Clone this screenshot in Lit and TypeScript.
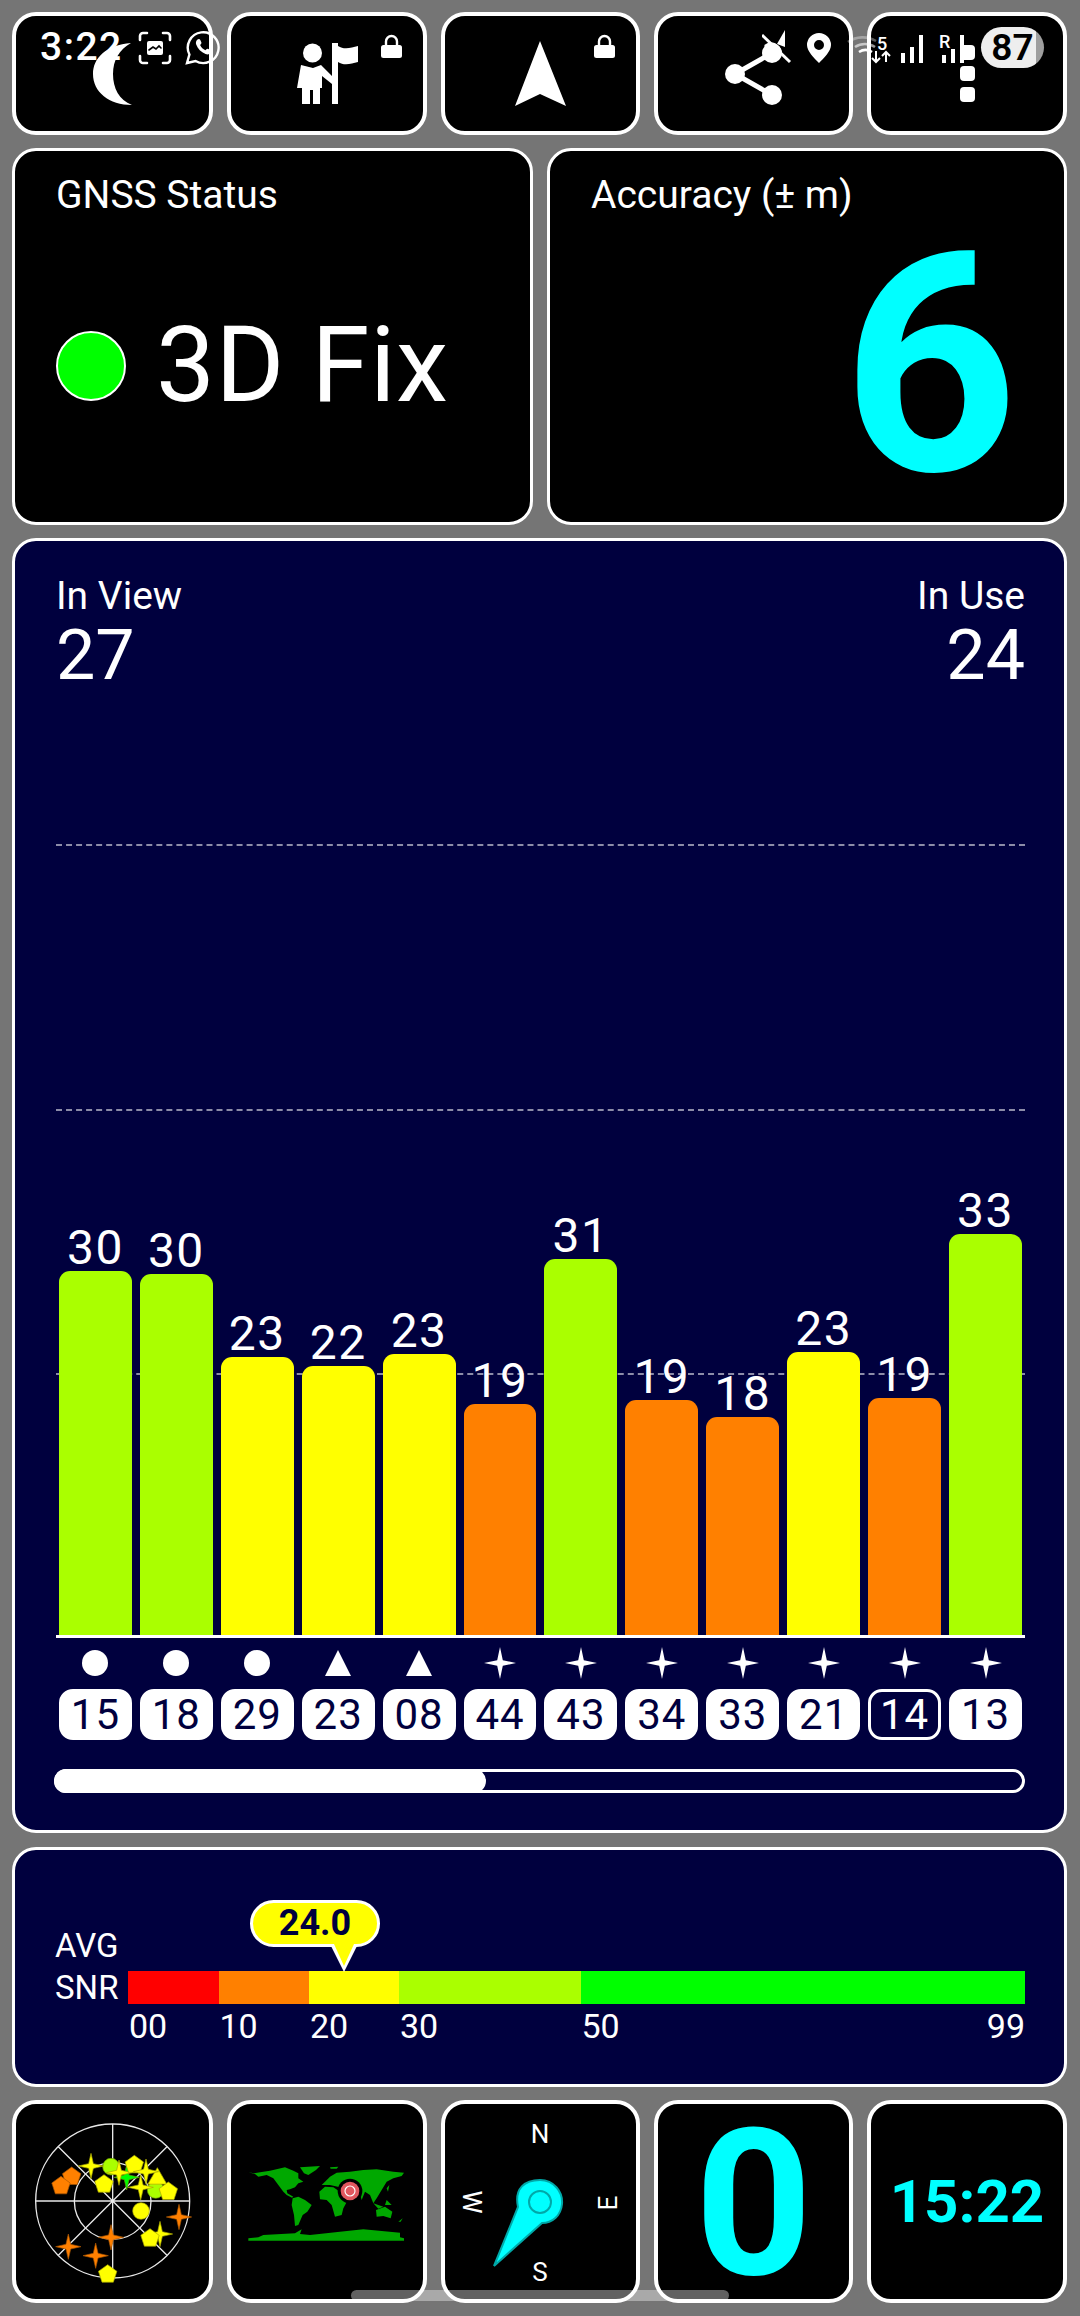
import { LitElement, html, css, svg } from "lit";
import { customElement } from "lit/decorators.js";

const bars: { v: number; top: number; color: string; icon: string; id: string; off?: boolean }[] = [
  { v: 30, top: 1272, color: "#aaff00", icon: "c", id: "15" },
  { v: 30, top: 1275, color: "#aaff00", icon: "c", id: "18" },
  { v: 23, top: 1358, color: "#ffff00", icon: "c", id: "29" },
  { v: 22, top: 1367, color: "#ffff00", icon: "t", id: "23" },
  { v: 23, top: 1355, color: "#ffff00", icon: "t", id: "08" },
  { v: 19, top: 1405, color: "#ff8000", icon: "s", id: "44" },
  { v: 31, top: 1260, color: "#aaff00", icon: "s", id: "43" },
  { v: 19, top: 1401, color: "#ff8000", icon: "s", id: "34" },
  { v: 18, top: 1418, color: "#ff8000", icon: "s", id: "33" },
  { v: 23, top: 1353, color: "#ffff00", icon: "s", id: "21" },
  { v: 19, top: 1399, color: "#ff8000", icon: "s", id: "14", off: true },
  { v: 33, top: 1235, color: "#aaff00", icon: "s", id: "13" },
];

const segs = [
  { w: 90.5, c: "#ff0000", l: "00" },
  { w: 90.5, c: "#ff8000", l: "10" },
  { w: 90, c: "#ffff00", l: "20" },
  { w: 181.5, c: "#aaff00", l: "30" },
  { w: 444.5, c: "#00ff00", l: "50", r: "99" },
];

function pts(cx: number, cy: number, r: number, n: number, inner?: number) {
  const out: string[] = [];
  const count = inner ? n * 2 : n;
  for (let i = 0; i < count; i++) {
    const a = -Math.PI / 2 + (i * 2 * Math.PI) / count;
    const rr = inner && i % 2 ? inner : r;
    out.push(`${(cx + rr * Math.cos(a)).toFixed(1)},${(cy + rr * Math.sin(a)).toFixed(1)}`);
  }
  return out.join(" ");
}

const Y = "#ffff00", O = "#ff8000", G = "#aaff00";
const sats: [string, number, number, string][] = [
  ["p", 215, 260, O], ["p", 183, 288, O],
  ["s", 537, 381, O], ["s", 205, 470, O], ["s", 287, 497, O], ["s", 333, 442, O],
  ["c", 333, 230, G], ["c", 467, 300, G], ["s", 380, 262, "#00ff00"],
  ["s", 273, 228, Y], ["p", 312, 283, Y], ["s", 357, 248, Y], ["p", 403, 225, Y],
  ["t", 472, 260, Y], ["s", 438, 245, Y], ["s", 422, 292, Y], ["p", 505, 305, Y],
  ["c", 423, 363, Y], ["s", 480, 432, Y], ["p", 450, 445, Y], ["p", 323, 553, Y],
];

function sat(k: string, x: number, y: number, c: string) {
  const st = c === O ? "#a85400" : c === Y ? "#a8a800" : "#6a9a00";
  if (k === "c") return svg`<circle cx=${x} cy=${y} r="25" fill=${c} stroke=${st} stroke-width="2"/>`;
  if (k === "p") return svg`<polygon points=${pts(x, y, 29, 5)} fill=${c} stroke=${st} stroke-width="2"/>`;
  if (k === "t") return svg`<polygon points=${pts(x, y + 6, 33, 3)} fill=${c} stroke=${st} stroke-width="2"/>`;
  return svg`<polygon points=${pts(x, y, 38, 4, 10)} fill=${c} stroke=${st} stroke-width="2"/>`;
}

const lock = html`<svg class="lock" viewBox="0 0 21 24"><path d="M5 12V7.500a5.500 5.500 0 0 1 11 0V12" fill="none" stroke="#fff" stroke-width="2.400"/><rect x="0" y="11" width="21" height="13" rx="2.500" fill="#fff"/></svg>`;

@customElement("app-root")
export class AppRoot extends LitElement {
  static styles = css`
    :host { display: block; width: 1080px; height: 2316px; background: #757575; font-family: Roboto, "Liberation Sans", sans-serif; color: #fff; position: relative; overflow: hidden; }
    * { box-sizing: border-box; }
    .page { display: flex; flex-direction: column; padding: 12px 13px 0 12px; }
    .tile { border: 3px solid #fff; border-radius: 24px; background: #000; position: relative; min-height: 0; }
    .thick .tile { border-width: 4px; }
    .navy { background: #00003e; }
    .r1 { display: grid; grid-template-columns: 201px 200px 199px 199px 200px; grid-template-rows: 123px; gap: 14px; height: 123px; }
    .r2 { display: grid; grid-template-columns: 521px 520px; grid-template-rows: 377px; gap: 14px; height: 377px; margin-top: 13px; }
    .r5 { display: grid; grid-template-columns: 201px 200px 199px 199px 200px; grid-template-rows: 203px; gap: 14px; height: 203px; margin-top: 13px; }
    .center { display: flex; align-items: center; justify-content: center; }
    .lock { position: absolute; width: 21px; height: 24px; top: 18px; right: 21px; }
    .moon { width: 39px; height: 62px; }
    .person { width: 61px; height: 61px; }
    .arrow { width: 51px; height: 65px; }
    .share { width: 57px; height: 62px; }
    .dots { display: flex; flex-direction: column; gap: 6px; }
    .dots i { display: block; width: 15px; height: 15px; border-radius: 4px; background: #fff; }

    .status { position: absolute; left: 0; top: 27px; width: 1080px; height: 41px; display: flex; align-items: center; justify-content: space-between; padding: 0 36px 0 40px; }
    .sl, .sr { display: flex; align-items: center; }
    .time { font-size: 39px; font-weight: 500; letter-spacing: 1.5px; width: 81px; margin-right: 17px; line-height: 41px; white-space: nowrap; }
    .shot { width: 34px; height: 34px; margin-right: 13px; }
    .wa { width: 35px; height: 35px; }
    .cluster { width: 213px; height: 40px; margin-right: 6px; }
    .batt { width: 63px; height: 41px; border-radius: 21px; background: linear-gradient(90deg, #eee 87%, #9e9e9e 87%); color: #000; font-size: 37px; font-weight: 600; display: flex; align-items: center; justify-content: center; }

    .label { font-size: 39px; line-height: 44px; position: absolute; left: 41px; top: 22px; white-space: nowrap; }
    .fix { display: flex; align-items: center; height: 100%; padding: 58px 0 0 41px; }
    .dot { width: 70px; height: 70px; border-radius: 50%; background: #00ff00; border: 2px solid #fff; margin-right: 30px; flex: none; }
    .fixt { font-size: 105px; line-height: 110px; letter-spacing: 0.5px; white-space: nowrap; }
    .acc { height: 100%; display: flex; align-items: flex-start; justify-content: flex-end; padding: 65px 46px 0 0; }
    .six { font-size: 306px; font-weight: 700; line-height: 300px; color: #00ffff; }

    .chart { height: 1295px; margin-top: 13px; padding: 35px 39px 0 41px; display: flex; flex-direction: column; }
    .head { display: flex; justify-content: space-between; height: 111px; }
    .head > div:last-child { text-align: right; }
    .hl { font-size: 39px; line-height: 40px; margin-bottom: 6px; }
    .hv { font-size: 70px; line-height: 66px; }
    .plot { height: 948px; position: relative; display: grid; grid-template-columns: repeat(12, 1fr); gap: 8px; padding: 0 3px; align-items: end; }
    .grid { position: absolute; left: 0; right: 0; border-top: 2px dashed rgba(255, 255, 255, 0.55); height: 0; }
    .g1 { top: 157px; } .g2 { top: 422px; } .g3 { top: 686px; }
    .col { position: relative; display: flex; flex-direction: column; align-items: stretch; }
    .num { font-size: 48px; letter-spacing: 1.5px; line-height: 46px; text-align: center; }
    .bar { border-radius: 11px 11px 0 0; }
    .base { height: 3px; background: #fff; }
    .rowg { display: grid; grid-template-columns: repeat(12, 1fr); gap: 8px; padding: 0 3px; }
    .icons { margin-top: 8px; height: 34px; }
    .icons svg { display: block; margin: auto; width: 34px; height: 34px; }
    .pills { margin-top: 9px; }
    .pill { height: 51px; border-radius: 14px; background: #fff; color: #00003e; font-size: 42px; letter-spacing: 1px; text-align: center; border: 3px solid #fff; line-height: 45px; }
    .pill.off { background: transparent; color: #fff; }
    .scroll { margin-top: 29px; height: 24px; border: 3px solid #fff; border-radius: 12px; position: relative; margin-left: -2px; }
    .thumb { position: absolute; left: -3px; top: -3px; bottom: -3px; width: 432px; background: #fff; border-radius: 12px; }

    .snr { height: 240px; margin-top: 14px; padding: 75px 39px 0 40px; display: flex; position: relative; }
    .sl2 { width: 73px; font-size: 33px; line-height: 42px; }
    .scale { flex: 1; display: flex; padding-top: 46px; }
    .seg { display: flex; flex-direction: column; }
    .sc { height: 33px; }
    .st { font-size: 34px; line-height: 40px; padding-top: 2px; display: flex; justify-content: space-between; padding-left: 1px; }
    .bubble { position: absolute; left: 235px; top: 50px; width: 130px; height: 47px; border-radius: 24px; background: #ffff00; border: 3px solid #fff; color: #00003e; font-size: 36px; font-weight: 700; line-height: 41px; text-align: center; }
    .tip { position: absolute; left: 314px; top: 94px; width: 30px; height: 28px; }

    .full { display: block; width: 100%; height: 100%; }
    .zero { font-size: 205px; font-weight: 700; color: #00ffff; line-height: 190px; height: 100%; display: flex; align-items: center; justify-content: center; padding-top: 4px; }
    .clock { font-size: 60px; font-weight: 700; color: #00ffff; height: 100%; display: flex; align-items: center; justify-content: center; }
    .handle { position: absolute; left: 351px; top: 2290px; width: 378px; height: 11px; border-radius: 6px; background: rgba(255, 255, 255, 0.38); }
  `;

  private icon(k: string) {
    if (k === "c") return svg`<circle cx="17" cy="17" r="13"/>`;
    if (k === "t") return svg`<polygon points="17,4 30,30 4,30"/>`;
    return svg`<polygon points=${pts(17, 17, 16, 4, 4)}/>`;
  }

  render() {
    return html`
      <div class="page">
        <div class="r1 thick">
          <div class="tile center">
            <svg class="moon" viewBox="92 43 39 62"><path fill="#fff" d="M130 43C105 45 92 58 92 74C92 92 108 105 131 105C118 100 112 88 112 74C112 60 118 50 130 43Z"/></svg>
          </div>
          <div class="tile center">
            <svg class="person" viewBox="296 43 61 61"><g fill="#fff"><circle cx="311.500" cy="53" r="9.500"/><path d="M300 65L312 68L320 65L331 76V84L321 76V88H319V104H312V90H309V104H301V88H296Z"/><rect x="331" y="43" width="6" height="61"/><path d="M337 46C343 50 350 48 357 46V62C350 64 343 66 337 62Z"/></g></svg>
            ${lock}
          </div>
          <div class="tile center">
            <svg class="arrow" viewBox="516 41 51 65"><path fill="#fff" d="M541 41L567 106L541 94L516 106Z"/></svg>
            ${lock}
          </div>
          <div class="tile center">
            <svg class="share" viewBox="720 43 57 62"><g fill="#fff"><circle cx="767" cy="53" r="10"/><circle cx="730" cy="74" r="10"/><circle cx="767" cy="95" r="10"/></g><path d="M767 53L730 74L767 95" fill="none" stroke="#fff" stroke-width="5"/></svg>
          </div>
          <div class="tile center"><div class="dots"><i></i><i></i><i></i></div></div>
        </div>

        <div class="r2">
          <div class="tile">
            <div class="label">GNSS Status</div>
            <div class="fix"><div class="dot"></div><div class="fixt">3D Fix</div></div>
          </div>
          <div class="tile">
            <div class="label">Accuracy (± m)</div>
            <div class="acc"><div class="six">6</div></div>
          </div>
        </div>

        <div class="tile navy chart">
          <div class="head">
            <div><div class="hl">In View</div><div class="hv">27</div></div>
            <div><div class="hl">In Use</div><div class="hv">24</div></div>
          </div>
          <div class="plot">
            <div class="grid g1"></div><div class="grid g2"></div><div class="grid g3"></div>
            ${bars.map(
              (b) => html`<div class="col"><div class="num">${b.v}</div><div class="bar" style="height:${1636 - b.top}px;background:${b.color}"></div></div>`
            )}
          </div>
          <div class="base"></div>
          <div class="rowg icons">
            ${bars.map((b) => html`<svg viewBox="0 0 34 34" fill="#fff">${this.icon(b.icon)}</svg>`)}
          </div>
          <div class="rowg pills">
            ${bars.map((b) => html`<div class="pill ${b.off ? "off" : ""}">${b.id}</div>`)}
          </div>
          <div class="scroll"><div class="thumb"></div></div>
        </div>

        <div class="tile navy snr">
          <div class="sl2"><div>AVG</div><div>SNR</div></div>
          <div class="scale">
            ${segs.map(
              (s) => html`<div class="seg" style="width:${s.w}px"><div class="sc" style="background:${s.c}"></div><div class="st"><span>${s.l}</span>${s.r ? html`<span>${s.r}</span>` : ""}</div></div>`
            )}
          </div>
          <div class="bubble">24.0</div>
          <svg class="tip" viewBox="0 0 30 28"><polygon points="1,0 29,0 15,28" fill="#fff"/><polygon points="5,0 25,0 15,22" fill="#ffff00"/></svg>
        </div>

        <div class="r5 thick">
          <div class="tile">
            <svg class="full" viewBox="48 42 579 585">
              <g fill="none" stroke="#e8e8e8" stroke-width="4">
                <circle cx="338" cy="333" r="231"/>
                <circle cx="338" cy="333" r="115"/>
                <path d="M338 102V564M107 333H569M175 170L501 496M501 170L175 496"/>
              </g>
              ${sats.map(([k, x, y, c]) => sat(k, x, y, c))}
            </svg>
          </div>
          <div class="tile">
            <svg class="full" viewBox="3 -138 576 585">
              <g fill="#00a800">
                <path d="M55 67L72 70L100 65L120 62L165 52L190 62L205 70L205 85L220 95L205 100L195 112L180 118L170 120L172 130L190 140L186 143L170 135L160 125L145 105L130 85L110 75L85 80L75 72Z"/>
                <path d="M210 52L270 48L258 60L235 75L222 70Z"/>
                <path d="M300 52L325 50L320 56L302 56Z"/>
                <path d="M188 145L205 140L225 150L245 165L232 185L218 195L205 225L195 228L192 195L185 165Z"/>
                <path d="M268 125L285 110L310 112L330 125L345 145L358 142L340 175L335 195L315 200L305 165L290 150L270 148Z"/>
                <path d="M275 105L285 95L300 80L320 68L360 65L400 60L440 58L490 65L522 68L515 78L490 85L470 95L455 120L440 145L430 160L420 135L405 125L395 150L385 115L360 120L330 112L300 105Z"/>
                <path d="M470 115L478 105L474 125ZM430 160L460 170L445 176ZM470 150L485 165L465 165Z"/>
                <path d="M438 180L465 170L487 185L482 205L460 198L440 200Z"/>
                <path d="M505 215L518 205L512 215Z"/>
                <path d="M55 265L85 262L100 255L195 250L215 238L210 252L240 255L330 245L400 238L510 248V262L522 265V272H55Z"/>
              </g>
              <circle cx="360" cy="123" r="37" fill="#000"/>
              <circle cx="360" cy="123" r="28" fill="#e2585f"/>
              <circle cx="360" cy="123" r="15" fill="none" stroke="#fff" stroke-width="3.500"/>
            </svg>
          </div>
          <div class="tile">
            <svg class="full" viewBox="445 2104 191 195">
              <g fill="#fff" font-family="Roboto, sans-serif" font-size="26" text-anchor="middle">
                <text x="540" y="2143">N</text>
                <text x="540" y="2281">S</text>
                <text transform="translate(463 2202) rotate(90)">W</text>
                <text transform="translate(617 2203) rotate(-90)">E</text>
              </g>
              <path d="M518 2207C514 2188 525 2180 540 2180C554 2180 563 2192 562 2204C561 2216 552 2223 542 2223L494 2266Z" fill="#00ffff" stroke="#00a8a8" stroke-width="2"/>
              <circle cx="540" cy="2202" r="11" fill="none" stroke="#00a8a8" stroke-width="2"/>
            </svg>
          </div>
          <div class="tile"><div class="zero">0</div></div>
          <div class="tile"><div class="clock">15:22</div></div>
        </div>
      </div>

      <div class="status">
        <div class="sl">
          <div class="time">3:22</div>
          <svg class="shot" viewBox="0 0 34 34" fill="none" stroke="#fff" stroke-width="2.600" stroke-linecap="round">
            <path d="M2 9V5a3 3 0 0 1 3-3h4M25 2h4a3 3 0 0 1 3 3v4M32 25v4a3 3 0 0 1-3 3h-4M9 32H5a3 3 0 0 1-3-3v-4"/>
            <rect x="9" y="10" width="16" height="14" rx="2" fill="#fff" stroke="none"/>
            <path d="M11 19l4-3 3 2 3-3 2 2" stroke="#000" stroke-width="1.600"/>
          </svg>
          <svg class="wa" viewBox="0 0 35 35" fill="none" stroke="#fff" stroke-width="2.400">
            <path d="M2 33l2.400-8.500A15.400 15.400 0 1 1 10.500 31Z"/>
            <path fill="#fff" stroke="none" d="M12.500 9.500c1-.9 2.200-.8 2.800.4l1 2.300c.3.8.1 1.400-.5 2l-.7.8c1.100 2.400 3 4.200 5.300 5.300l1-1c.6-.6 1.300-.7 2-.3l2.100 1.200c1 .6 1.100 1.800.2 2.800-1.300 1.500-3.200 1.800-5.200 1-4.400-1.700-7.800-5-9.300-9.400-.7-1.900-.1-3.700 1.300-5.100Z"/>
          </svg>
        </div>
        <div class="sr">
          <svg class="cluster" viewBox="762 28 213 40">
            <g fill="#fff">
              <path d="M785 30L785 47L777 44Z"/>
              <path d="M762 35L790 62" stroke="#fff" stroke-width="3"/>
              <path d="M764 46C770 38 780 44 782 52L776 56Z" />
              <path fill-rule="evenodd" d="M819 33a12 12 0 0 1 12 12c0 6-7 13-12 18c-5-5-12-12-12-18a12 12 0 0 1 12-12Zm0 7a5 5 0 1 0 0 10a5 5 0 0 0 0-10Z"/>
              <text x="877" y="50" font-family="Roboto, sans-serif" font-size="18" font-weight="500">5</text>
              <text x="939" y="48" font-family="Roboto, sans-serif" font-size="18" font-weight="500">R</text>
              <rect x="901" y="53" width="4" height="10"/><rect x="910" y="47" width="4" height="16"/><rect x="919" y="35" width="4" height="28"/>
              <rect x="942" y="55" width="4" height="8"/><rect x="951" y="49" width="4" height="14"/><rect x="960" y="35" width="4" height="28"/>
            </g>
            <g fill="none" stroke="#fff" stroke-width="2.600">
              <path d="M855 47a18 18 0 0 1 20 0" stroke-opacity=".6"/>
              <path d="M859 52a12 12 0 0 1 13 0"/>
              <path d="M848 42a26 26 0 0 1 28 -1" stroke-opacity=".35"/>
              <path d="M876 51V62M872 58l4 4 4-4M886 62V52M882 56l4-4 4 4" stroke-width="2"/>
            </g>
          </svg>
          <div class="batt">87</div>
        </div>
      </div>
      <div class="handle"></div>
    `;
  }
}
